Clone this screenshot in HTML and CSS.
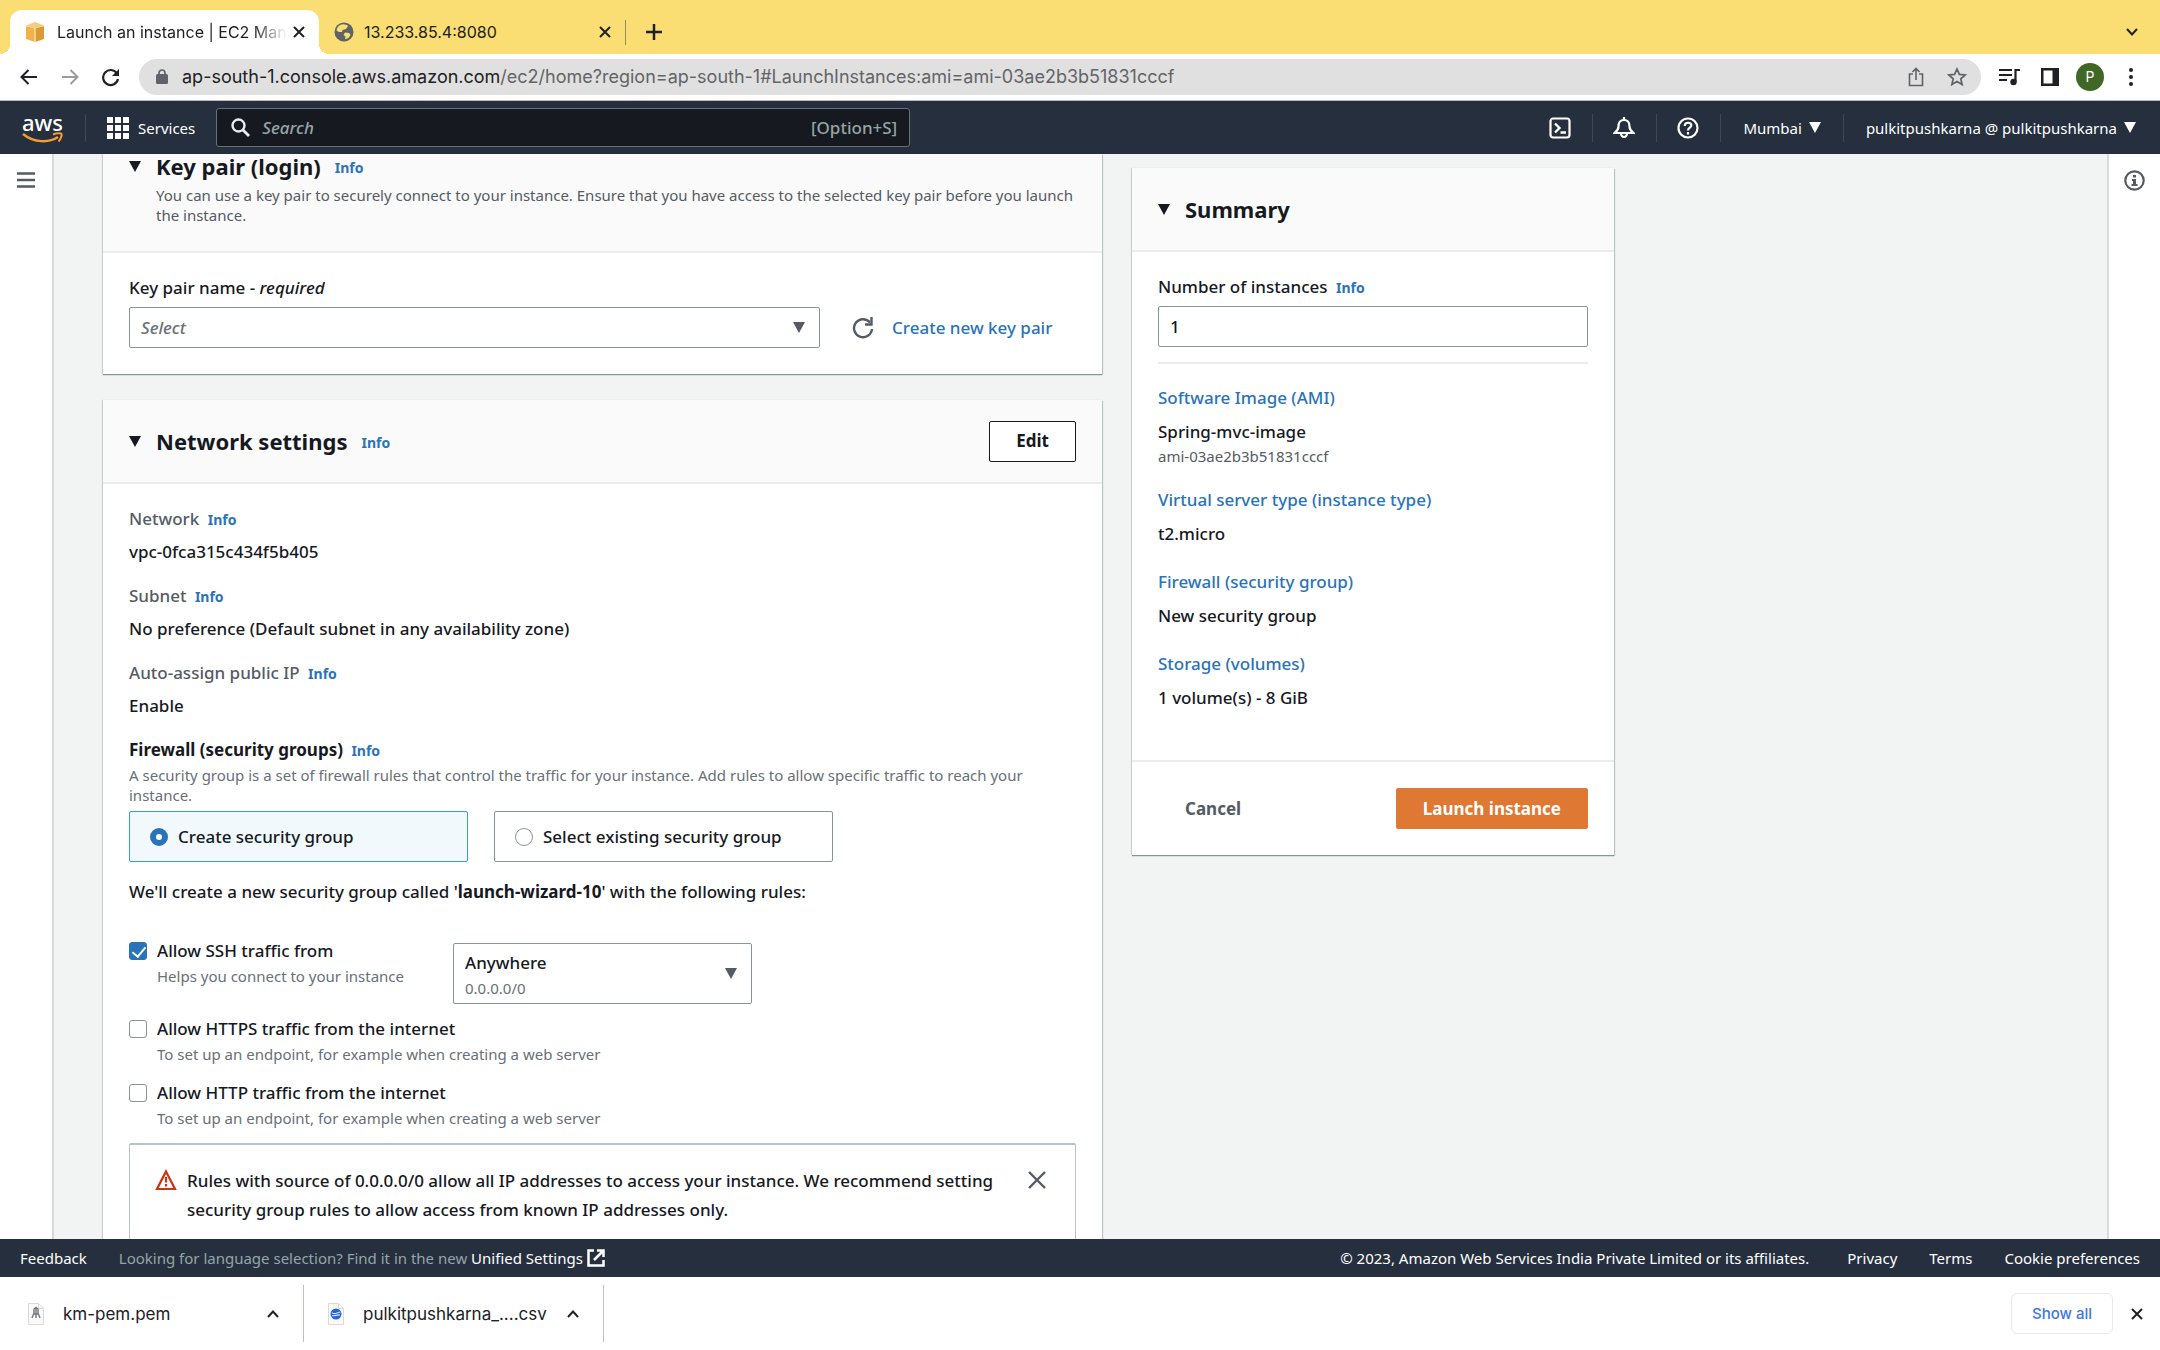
FILE: index.html
```html
<!DOCTYPE html>
<html lang="en">
<head>
    <meta charset="UTF-8">
    <meta name="viewport" content="width=device-width, initial-scale=1.0">
    <title>Launch an instance | EC2 Management Console</title>
    <link rel="stylesheet" href="styles.css">
</head>
<body>

<!-- Browser tabs -->
<div class="tab-strip">
    <div class="tab active">
        <svg class="favicon" viewBox="0 0 20 20"><path d="M1 4l9 2.500v13.500l-9-3z" fill="#f0b24a"/><path d="M19 4l-9 2.500v13.500l9-3z" fill="#dc9a35"/><path d="M1 3.500l9-3.500 9 3.500-9 3z" fill="#f6cb7d"/><path d="M10 6v14" stroke="#f9dca4" stroke-width="1.500"/></svg>
        <span class="tab-title">Launch an instance | EC2 Mana</span>
        <button class="icon-btn" aria-label="Close tab"><svg width="12" height="12" viewBox="0 0 12 12"><path d="M1 1l10 10M11 1L1 11" stroke="#202124" stroke-width="2"/></svg></button>
    </div>
    <div class="tab">
        <svg class="favicon" viewBox="0 0 20 20"><circle cx="10" cy="10" r="9.500" fill="#5f6368"/><path d="M6 3c3-1.500 7-.5 8 1l-2 3-3.500 1L8 10H5L2.500 8.500C3 6 4 4 6 3zM11 10.500l4 .5 1.500 1.500c-1 3-3 4.500-5.500 4.500l.5-2.500-2-1.500z" fill="#fadd73"/></svg>
        <span class="tab-title">13.233.85.4:8080</span>
        <button class="icon-btn" aria-label="Close tab"><svg width="12" height="12" viewBox="0 0 12 12"><path d="M1 1l10 10M11 1L1 11" stroke="#202124" stroke-width="2"/></svg></button>
    </div>
    <button class="icon-btn new-tab" aria-label="New tab"><svg width="16" height="16" viewBox="0 0 16 16"><path d="M8 0v16M0 8h16" stroke="#202124" stroke-width="2.500"/></svg></button>
    <button class="icon-btn tab-search" aria-label="Search tabs"><svg width="12" height="8" viewBox="0 0 12 8"><path d="M1 1l5 5.500L11 1" fill="none" stroke="#202124" stroke-width="2"/></svg></button>
</div>

<!-- Address bar -->
<div class="toolbar">
    <button class="icon-btn tool" aria-label="Back"><svg width="18" height="16" viewBox="0 0 18 16"><path d="M17 8H2M8.500 1l-7 7 7 7" fill="none" stroke="#202124" stroke-width="2"/></svg></button>
    <button class="icon-btn tool" aria-label="Forward"><svg width="18" height="16" viewBox="0 0 18 16"><path d="M1 8h15M9.500 1l7 7-7 7" fill="none" stroke="#9a9c9f" stroke-width="2"/></svg></button>
    <button class="icon-btn tool" aria-label="Reload"><svg width="19" height="19" viewBox="0 0 19 19"><path d="M16 5.500A7.500 7.500 0 1 0 17 11" fill="none" stroke="#202124" stroke-width="2.200"/><path d="M18 1v7h-7z" fill="#202124"/></svg></button>
    <div class="address">
        <svg width="12" height="16" viewBox="0 0 12 16"><rect y="5" width="12" height="10" rx="1.500" fill="#5f6368"/><path d="M3 6V4a3 3 0 0 1 6 0v2" fill="none" stroke="#5f6368" stroke-width="1.700"/></svg>
        <span class="url">ap-south-1.console.aws.amazon.com<span class="url-path">/ec2/home?region=ap-south-1#LaunchInstances:ami=ami-03ae2b3b51831cccf</span></span>
        <button class="icon-btn" aria-label="Share"><svg width="16" height="20" viewBox="0 0 16 20"><path d="M5 7H1.500v11.500h13V7H11M8 13V2M4.500 5L8 1.500 11.500 5" fill="none" stroke="#5f6368" stroke-width="1.600"/></svg></button>
        <button class="icon-btn star" aria-label="Bookmark"><svg width="20" height="20" viewBox="0 0 20 20"><path d="M10 2l2.400 5.400 5.800.5-4.400 3.900 1.300 5.700-5.100-3-5.100 3 1.300-5.700-4.400-3.900 5.800-.5z" fill="none" stroke="#5f6368" stroke-width="1.700"/></svg></button>
    </div>
    <button class="icon-btn media" aria-label="Media controls"><svg width="22" height="18" viewBox="0 0 22 18"><path d="M0 2h13M0 7h13M0 12h8" stroke="#202124" stroke-width="2.200"/><path d="M16.500 14V2H21" fill="none" stroke="#202124" stroke-width="2.200"/><circle cx="14.500" cy="14" r="3.200" fill="#202124"/></svg></button>
    <button class="icon-btn side-panel" aria-label="Side panel"><svg width="18" height="18" viewBox="0 0 18 18"><path d="M0 0h18v18H0zM2.500 2.500v13h9v-13z" fill="#202124" fill-rule="evenodd"/></svg></button>
    <button class="avatar">P</button>
    <button class="icon-btn more" aria-label="Menu"><svg width="4" height="18" viewBox="0 0 4 18" fill="#202124"><circle cx="2" cy="2" r="2"/><circle cx="2" cy="9" r="2"/><circle cx="2" cy="16" r="2"/></svg></button>
</div>

<!-- AWS navigation -->
<header class="nav">
    <a class="logo" href="#" aria-label="AWS home">
        <span class="logo-text">aws</span>
        <svg width="41" height="12" viewBox="0 0 41 12"><path d="M1 2c11 9 26 9 35 3" fill="none" stroke="#f79b34" stroke-width="2.400"/><path d="M31 2.500c4-1.500 8-1.500 8.500-.5s-.5 5-3 7.500" fill="none" stroke="#f79b34" stroke-width="2"/></svg>
    </a>
    <button class="nav-item services">
        <svg width="22" height="22" viewBox="0 0 22 22" fill="#fff"><path d="M0 0h6v6H0zM8 0h6v6H8zM16 0h6v6h-6zM0 8h6v6H0zM8 8h6v6H8zM16 8h6v6h-6zM0 16h6v6H0zM8 16h6v6H8zM16 16h6v6h-6z"/></svg>
        Services
    </button>
    <label class="search">
        <svg width="19" height="19" viewBox="0 0 19 19"><circle cx="7.500" cy="7.500" r="6" fill="none" stroke="#eaeded" stroke-width="2.400"/><path d="M12 12l6 6" stroke="#eaeded" stroke-width="2.800"/></svg>
        <input type="search" placeholder="Search" aria-label="Search">
        <span>[Option+S]</span>
    </label>
    <nav class="nav-right">
        <button class="nav-item nav-icon" aria-label="CloudShell"><svg width="22" height="22" viewBox="0 0 22 22" fill="none" stroke="#fff" stroke-width="2.200"><rect x="1.500" y="1.500" width="19" height="19" rx="2.500"/><path d="M6 6.500l4.500 4.500L6 15.500M11.500 15.500H17" stroke-width="2.400"/></svg></button>
        <button class="nav-item nav-icon" aria-label="Notifications"><svg width="22" height="22" viewBox="0 0 22 22" fill="none" stroke="#fff" stroke-width="2.200"><path d="M11 0v3M11 3c-4 0-5.500 3-5.500 6.500S4 14 1.500 16h19c-2.500-2-4-3-4-6.500S15 3 11 3z"/><path d="M8 16.500a3 3.500 0 0 0 6 0"/></svg></button>
        <button class="nav-item nav-icon" aria-label="Help"><svg width="22" height="22" viewBox="0 0 22 22" fill="none" stroke="#fff" stroke-width="2.200"><circle cx="11" cy="11" r="9.500"/><path d="M7.800 9c0-4.500 6.500-4 6.500-.5 0 2.300-3.300 2.200-3.300 5M11 15v2.500"/></svg></button>
        <button class="nav-item region">Mumbai <svg class="caret" viewBox="0 0 12 11"><path d="M0 0h12L6 11z"/></svg></button>
        <button class="nav-item user">pulkitpushkarna @ pulkitpushkarna <svg class="caret" viewBox="0 0 12 11"><path d="M0 0h12L6 11z"/></svg></button>
    </nav>
</header>

<main class="main">
    <aside class="rail rail-left">
        <button class="icon-btn" aria-label="Open navigation"><svg width="18" height="16" viewBox="0 0 18 16"><path d="M0 1.500h18M0 8h18M0 14.500h18" stroke="#545b64" stroke-width="2.500"/></svg></button>
    </aside>

    <div class="scroll">
        <div class="content">
            <div class="column">

                <section class="panel">
                    <div class="panel-header scrolled">
                        <div>
                            <h2><svg class="caret" viewBox="0 0 12 11"><path d="M0 0h12L6 11z"/></svg>Key pair (login) <a class="info" href="#">Info</a></h2>
                            <p class="header-desc">You can use a key pair to securely connect to your instance. Ensure that you have access to the selected key pair before you launch the instance.</p>
                        </div>
                    </div>
                    <div class="panel-body">
                        <label class="label" for="key_pair">Key pair name - <i>required</i></label>
                        <div class="key-row">
                            <div class="select-wrap key-select">
                                <select id="key_pair"><option>Select</option></select>
                                <svg class="caret" viewBox="0 0 12 11"><path d="M0 0h12L6 11z"/></svg>
                            </div>
                            <button class="icon-btn" aria-label="Refresh"><svg width="22" height="22" viewBox="0 0 22 22"><path d="M18 5.500A9 9 0 1 0 20 12" fill="none" stroke="#545b64" stroke-width="2.400"/><path d="M19.500 0v7.500H13" fill="none" stroke="#545b64" stroke-width="2.400"/></svg></button>
                            <a href="#">Create new key pair</a>
                        </div>
                    </div>
                </section>

                <section class="panel">
                    <div class="panel-header">
                        <h2><svg class="caret" viewBox="0 0 12 11"><path d="M0 0h12L6 11z"/></svg>Network settings <a class="info" href="#">Info</a></h2>
                        <button class="btn">Edit</button>
                    </div>
                    <div class="panel-body">
                        <dl class="fields">
                            <dt>Network <a class="info" href="#">Info</a></dt>
                            <dd>vpc-0fca315c434f5b405</dd>
                            <dt>Subnet <a class="info" href="#">Info</a></dt>
                            <dd>No preference (Default subnet in any availability zone)</dd>
                            <dt>Auto-assign public IP <a class="info" href="#">Info</a></dt>
                            <dd>Enable</dd>
                        </dl>

                        <h3>Firewall (security groups) <a class="info" href="#">Info</a></h3>
                        <p class="help">A security group is a set of firewall rules that control the traffic for your instance. Add rules to allow specific traffic to reach your instance.</p>
                        <div class="tiles">
                            <label class="tile selected"><input type="radio" name="group" checked> Create security group</label>
                            <label class="tile"><input type="radio" name="group"> Select existing security group</label>
                        </div>
                        <p class="group-note">We'll create a new security group called '<b>launch-wizard-10</b>' with the following rules:</p>

                        <div class="ssh-row">
                            <div class="check">
                                <input type="checkbox" id="ssh" checked>
                                <label for="ssh">Allow SSH traffic from</label>
                                <p class="help">Helps you connect to your instance</p>
                            </div>
                            <div class="select-wrap source-select">
                                <select aria-label="SSH source"><option>Anywhere</option></select>
                                <span class="source-cidr">0.0.0.0/0</span>
                                <svg class="caret" viewBox="0 0 12 11"><path d="M0 0h12L6 11z"/></svg>
                            </div>
                        </div>
                        <div class="check">
                            <input type="checkbox" id="https">
                            <label for="https">Allow HTTPS traffic from the internet</label>
                            <p class="help">To set up an endpoint, for example when creating a web server</p>
                        </div>
                        <div class="check">
                            <input type="checkbox" id="http">
                            <label for="http">Allow HTTP traffic from the internet</label>
                            <p class="help">To set up an endpoint, for example when creating a web server</p>
                        </div>

                        <div class="alert">
                            <svg width="22" height="22" viewBox="0 0 22 22"><path d="M11 2.500L20 20H2z" fill="none" stroke="#d13212" stroke-width="2.200"/><path d="M11 8v5.500M11 15v2.500" stroke="#d13212" stroke-width="2.200"/></svg>
                            <p>Rules with source of 0.0.0.0/0 allow all IP addresses to access your instance. We recommend setting security group rules to allow access from known IP addresses only.</p>
                            <button class="icon-btn" aria-label="Dismiss"><svg width="18" height="18" viewBox="0 0 18 18"><path d="M1 1l16 16M17 1L1 17" stroke="#545b64" stroke-width="2.400"/></svg></button>
                        </div>
                    </div>
                </section>
            </div>

            <section class="panel summary">
                <div class="panel-header">
                    <h2><svg class="caret" viewBox="0 0 12 11"><path d="M0 0h12L6 11z"/></svg>Summary</h2>
                </div>
                <div class="panel-body">
                    <label class="label" for="count">Number of instances</label> <a class="info" href="#">Info</a>
                    <input type="text" id="count" value="1">
                    <hr>
                    <dl class="summary-list">
                        <dt><a href="#">Software Image (AMI)</a></dt>
                        <dd>Spring-mvc-image <small>ami-03ae2b3b51831cccf</small></dd>
                        <dt><a href="#">Virtual server type (instance type)</a></dt>
                        <dd>t2.micro</dd>
                        <dt><a href="#">Firewall (security group)</a></dt>
                        <dd>New security group</dd>
                        <dt><a href="#">Storage (volumes)</a></dt>
                        <dd>1 volume(s) - 8 GiB</dd>
                    </dl>
                </div>
                <div class="panel-footer">
                    <button class="btn btn-link">Cancel</button>
                    <button class="btn btn-primary">Launch instance</button>
                </div>
            </section>
        </div>
    </div>

    <aside class="rail rail-right">
        <button class="icon-btn" aria-label="Info panel"><svg width="21" height="21" viewBox="0 0 21 21"><circle cx="10.500" cy="10.500" r="9.200" fill="none" stroke="#545b64" stroke-width="2.200"/><path d="M9 5h3v2.500H9zM8 9h4v5h1.500v2h-6v-2H9v-3H8z" fill="#545b64"/></svg></button>
    </aside>
</main>

<footer class="footer">
    <a href="#">Feedback</a>
    <p>Looking for language selection? Find it in the new <a href="#">Unified Settings <svg width="18" height="18" viewBox="0 0 18 18"><path d="M7 1.500H1.500v15h15V11M10 1.500h6.500V8M16 2L7 11" fill="none" stroke="#fff" stroke-width="2.500"/></svg></a></p>
    <span class="copyright">© 2023, Amazon Web Services India Private Limited or its affiliates.</span>
    <a href="#">Privacy</a>
    <a href="#">Terms</a>
    <a href="#">Cookie preferences</a>
</footer>

<!-- Downloads shelf -->
<div class="downloads">
    <div class="download">
        <svg width="16" height="22" viewBox="0 0 16 22"><path d="M.5.500h10l5 5v16H.5z" fill="#fafafa" stroke="#dadada"/><path d="M10.500.500v5h5" fill="none" stroke="#dadada"/><path d="M4 15l2-5M12 15l-2-5M6 6l2-1.500L10 6v5H6zM8 5v10" fill="none" stroke="#777b7e" stroke-width="1.500"/></svg>
        <span>km-pem.pem</span>
        <button class="icon-btn" aria-label="Options"><svg width="12" height="8" viewBox="0 0 12 8"><path d="M1 7l5-5.500L11 7" fill="none" stroke="#202124" stroke-width="2"/></svg></button>
    </div>
    <div class="download">
        <svg width="16" height="22" viewBox="0 0 16 22"><path d="M.5.500h10l5 5v16H.5z" fill="#fafafa" stroke="#dadada"/><path d="M10.500.500v5h5" fill="none" stroke="#dadada"/><circle cx="8" cy="11" r="5.500" fill="#2468d8"/><path d="M4 9.500c2 3 5 0 8.500-.5M4 12.500c3 1 5-1 8-.5" fill="none" stroke="#d7e4fa" stroke-width="1.200"/></svg>
        <span>pulkitpushkarna_....csv</span>
        <button class="icon-btn" aria-label="Options"><svg width="12" height="8" viewBox="0 0 12 8"><path d="M1 7l5-5.500L11 7" fill="none" stroke="#202124" stroke-width="2"/></svg></button>
    </div>
    <button class="show-all">Show all</button>
    <button class="icon-btn" aria-label="Close downloads"><svg width="12" height="12" viewBox="0 0 12 12"><path d="M1 1l10 10M11 1L1 11" stroke="#202124" stroke-width="2"/></svg></button>
</div>

</body>
</html>
```
FILE: styles.css
```css
* { box-sizing: border-box; }
body {
    margin: 0;
    height: 100vh;
    display: flex;
    flex-direction: column;
    overflow: hidden;
    font: 500 17px/28px "Noto Sans", sans-serif;
    color: #16191f;
    background: #fff;
}
h2, h3, p, dl, dd { margin: 0; }
a { color: #2a73b9; text-decoration: none; }
button, input, select { font: inherit; color: inherit; }
svg { flex: none; }
.icon-btn {
    display: flex;
    align-items: center;
    justify-content: center;
    padding: 0;
    border: none;
    background: none;
    cursor: pointer;
}
.caret { width: 12px; height: 11px; fill: currentColor; }

/* Browser */
.tab-strip {
    display: flex;
    align-items: center;
    height: 54px;
    padding: 10px 22px 0 10px;
    background: #fadd73;
    font: 16px/20px Inter, sans-serif;
    color: #202124;
}
.tab {
    display: flex;
    align-items: center;
    gap: 10px;
    width: 306px;
    height: 44px;
    padding: 0 14px 0 15px;
}
.tab.active {
    position: relative;
    width: 309px;
    border-radius: 12px 12px 0 0;
    background: #fff;
}
.tab.active::before, .tab.active::after {
    content: "";
    position: absolute;
    bottom: 0;
    width: 10px;
    height: 10px;
}
.tab.active::before { left: -10px; background: radial-gradient(circle at 0 0, transparent 10px, #fff 10px); }
.tab.active::after { right: -10px; background: radial-gradient(circle at 100% 0, transparent 10px, #fff 10px); }
.favicon { width: 20px; height: 20px; }
.tab-title { flex: 1; min-width: 0; overflow: hidden; white-space: nowrap; }
.tab.active .tab-title {
    margin: 0 -4px 0 2px;
    mask-image: linear-gradient(90deg, #000 85%, transparent);
}
.new-tab {
    height: 25px;
    padding-left: 20px;
    border-left: 1px solid #9c8c54;
}
.tab-search { margin-left: auto; }
.toolbar {
    display: flex;
    align-items: center;
    height: 47px;
    padding: 0 27px 0 8px;
    border-bottom: 1px solid #b8babd;
    font: 18px/24px Inter, sans-serif;
}
.tool { width: 41px; }
.address {
    flex: 1;
    display: flex;
    align-items: center;
    height: 36px;
    margin-left: 8px;
    padding: 0 14px 0 17px;
    border-radius: 18px;
    background: #e0e0e0;
    color: #202124;
}
.url { flex: 1; margin-left: 14px; }
.url-path { color: #636466; }
.star { margin-left: 23px; }
.media { margin-left: 18px; }
.side-panel { margin: 0 17px 0 20px; }
.avatar {
    width: 28px;
    height: 28px;
    padding: 0;
    border: none;
    border-radius: 50%;
    background: #3f6826;
    color: #fff;
    font-size: 14px;
    line-height: 28px;
}
.more { margin-left: 25px; }

/* AWS header */
.nav {
    display: flex;
    align-items: center;
    height: 53px;
    background: #252f3e;
    color: #fff;
}
.logo {
    display: flex;
    flex-direction: column;
    align-items: center;
    width: 85px;
    color: #fff;
}
.logo-text { font-size: 22px; line-height: 20px; font-weight: 500; }
.nav-item {
    display: flex;
    align-items: center;
    gap: 10px;
    height: 28px;
    padding: 0 22px;
    border: none;
    border-left: 1px solid #414750;
    background: none;
    font-size: 15px;
    font-weight: 400;
    white-space: nowrap;
}
.nav-item.services { gap: 9px; padding: 0 21px; }
.nav-icon { padding: 0 21px 0 20px; }
.nav-right .nav-item:first-child { border-left: none; }
.nav-right { display: flex; margin-left: auto; }
.region { gap: 7px; }
.user { padding-right: 24px; gap: 7px; }
.search {
    display: flex;
    align-items: center;
    flex: 0 1 694px;
    height: 39px;
    padding: 0 12px 0 14px;
    border: 1px solid #687078;
    border-radius: 3px;
    background: #16191f;
    color: #95a5a6;
}
.search input {
    flex: 1;
    min-width: 0;
    margin-left: 12px;
    padding: 0;
    border: none;
    outline: none;
    background: none;
}
.search input::placeholder { color: #95a5a6; font-style: italic; }

/* Page */
.main { flex: 1; min-height: 0; display: flex; }
.rail {
    flex: 0 0 52px;
    display: flex;
    justify-content: center;
    align-items: flex-start;
    padding-top: 18px;
}
.rail-right { flex-basis: 51px; padding-top: 16px; }
.scroll {
    flex: 1;
    overflow: hidden;
    padding: 0 50px 0 49px;
    border: solid #d5dbdb;
    border-width: 0 2px;
    background: #f2f3f3;
}
.content {
    display: grid;
    grid-template-columns: minmax(0, 1fr) 482px;
    gap: 30px;
    align-items: start;
    max-width: 1511px;
}
.panel {
    background: #fff;
    box-shadow: 0 1px 1px #879596, 1px 1px 1px #c5cccc, -1px 0 1px #d5dbdb;
}
.column .panel + .panel { margin-top: 26px; }
.summary { margin-top: 14px; }
.panel-header {
    display: flex;
    align-items: center;
    justify-content: space-between;
    min-height: 84px;
    padding: 0 26px;
    border-bottom: 2px solid #eaeded;
    background: #fafafa;
}
.panel-header.scrolled { min-height: 0; padding-bottom: 26px; }
h2 {
    display: flex;
    align-items: center;
    font-size: 22px;
    line-height: 24px;
    font-weight: 700;
}
h2 .caret { margin-right: 15px; }
h2 .info { margin: 4px 0 0 14px; }
.info {
    margin-left: 4px;
    font-size: 14px;
    line-height: 20px;
    font-weight: 700;
}
.header-desc, .help, .summary-list small, .source-cidr {
    font-size: 15px;
    line-height: 20px;
    font-weight: 400;
    color: #545b64;
}
.header-desc { margin: 7px 0 0 27px; }
.panel-body { padding: 21px 26px 26px; }
.select-wrap { position: relative; }
.select-wrap .caret {
    position: absolute;
    right: 15px;
    top: calc(50% - 6px);
    color: #545b64;
    pointer-events: none;
}
select, input[type="text"] {
    appearance: none;
    display: block;
    width: 100%;
    height: 41px;
    padding: 0 11px;
    border: 1px solid #879596;
    border-radius: 2px;
    background: #fff;
}
.label + .info + input, .key-row { margin-top: 5px; }
.key-row { display: flex; align-items: center; }
.key-row .icon-btn { margin: 0 18px 0 32px; }
.key-select { flex: 0 1 691px; }
.key-select select { font-style: italic; color: #687078; }
.btn {
    height: 41px;
    padding: 0 26px;
    border: 1px solid #16191f;
    border-radius: 2px;
    background: #fff;
    font-weight: 700;
}
.btn-link { border-color: transparent; color: #545b64; }
.btn-primary { border-color: #e07b35; background: #de7832; color: #fff; }

.fields dt { color: #545b64; }
.fields dd { margin: 5px 0 16px; }
h3 { font-size: 17px; line-height: 28px; font-weight: 700; }
.help { margin-top: 1px; color: #687078; }
.tiles { display: flex; gap: 26px; margin-top: 6px; }
.tile {
    display: flex;
    align-items: center;
    gap: 10px;
    flex: 0 1 339px;
    height: 51px;
    padding: 0 20px;
    border: 1px solid #879596;
    border-radius: 2px;
    white-space: nowrap;
}
.tile.selected { border-color: #3b9cc4; background: #f1f9fd; }
input[type="radio"], input[type="checkbox"] {
    appearance: none;
    flex: none;
    width: 18px;
    height: 18px;
    margin: 0;
    border: 1px solid #879596;
    background: #fff;
}
input[type="radio"] { border-radius: 50%; }
input[type="radio"]:checked { border: 6px solid #2a73b9; }
input[type="checkbox"] { border-radius: 3px; }
input[type="checkbox"]:checked {
    border-color: #2a73b9;
    background: #2a73b9;
}
input[type="checkbox"]:checked::before {
    content: "";
    display: block;
    width: 6px;
    height: 11px;
    margin: 1px 0 0 5px;
    border: solid #fff;
    border-width: 0 2px 2px 0;
    transform: rotate(40deg);
}
.group-note { margin-top: 16px; }
.check {
    display: grid;
    grid-template-columns: 18px 1fr;
    column-gap: 10px;
    align-items: center;
    align-content: start;
    margin-bottom: 15px;
}
.check .help { grid-column: 2; }
.ssh-row { display: flex; margin: 31px 0 11px; }
.ssh-row .check { flex: 0 0 324px; margin-bottom: 0; }
.source-select { flex: 0 1 299px; margin-top: 6px; }
.source-select select { height: 61px; padding-bottom: 22px; }
.source-cidr {
    position: absolute;
    left: 12px;
    bottom: 6px;
    color: #687078;
    pointer-events: none;
}
.alert {
    display: flex;
    align-items: flex-start;
    padding: 21px 29px 22px 25px;
    border: 1px solid #b9c2c4;
    border-top-width: 2px;
    border-radius: 2px;
}
.alert p { flex: 1; margin: 0 24px 0 10px; line-height: 29px; }
.alert > svg { margin-top: 3px; }
.alert .icon-btn { margin-top: 5px; }

hr { margin: 15px 0 20px; border: none; border-top: 2px solid #eaeded; }
.summary-list dd { margin: 6px 0 20px; }
.summary-list small { display: block; }
.summary-list dd:last-child { margin-bottom: 22px; }
.panel-footer {
    display: flex;
    justify-content: space-between;
    padding: 26px;
    border-top: 2px solid #eaeded;
}

.footer {
    display: flex;
    align-items: center;
    gap: 32px;
    height: 38px;
    padding: 0 20px;
    background: #252f3e;
    color: #95a5a6;
    font-size: 15px;
    font-weight: 400;
    white-space: nowrap;
}
.footer a, .copyright { color: #fff; }
.footer svg { vertical-align: -3px; }
.copyright { margin: 0 6px 0 auto; }

.downloads {
    display: flex;
    align-items: center;
    height: 73px;
    padding-right: 17px;
    font: 17px/24px Inter, sans-serif;
    color: #202124;
}
.download {
    display: flex;
    align-items: center;
    width: 304px;
    height: 57px;
    padding: 0 24px 0 28px;
    border-right: 1px solid #bdc1c6;
}
.download + .download { width: 300px; padding-left: 24px; }
.download span { flex: 1; margin-left: 19px; }
.show-all {
    height: 41px;
    margin: 0 18px 0 auto;
    padding: 0 20px;
    border: 1px solid #e8eaed;
    border-radius: 6px;
    background: #fff;
    color: #3b78e7;
    font-size: 15px;
    font-weight: 500;
}
```
